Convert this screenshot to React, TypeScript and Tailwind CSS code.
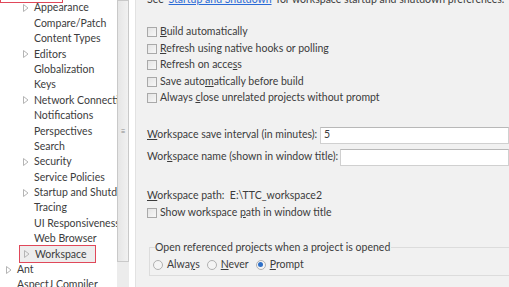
const TREE = [
  { label: 'General', level: 0, arrow: false },
  { label: 'Appearance', level: 1, arrow: true },
  { label: 'Compare/Patch', level: 1 },
  { label: 'Content Types', level: 1 },
  { label: 'Editors', level: 1, arrow: true },
  { label: 'Globalization', level: 1 },
  { label: 'Keys', level: 1 },
  { label: 'Network Connections', level: 1, arrow: true },
  { label: 'Notifications', level: 1 },
  { label: 'Perspectives', level: 1 },
  { label: 'Search', level: 1 },
  { label: 'Security', level: 1, arrow: true },
  { label: 'Service Policies', level: 1 },
  { label: 'Startup and Shutdown', level: 1, arrow: true },
  { label: 'Tracing', level: 1 },
  { label: 'UI Responsiveness Monitoring', level: 1 },
  { label: 'Web Browser', level: 1 },
  { label: 'Workspace', level: 1, arrow: true, selected: true },
  { label: 'Ant', level: 0, arrow: true },
  { label: 'AspectJ Compiler', level: 0 },
]

function Arrow() {
  return (
    <svg width="6" height="8" viewBox="0 0 6 8" className="shrink-0">
      <path d="M0.5 0.5 L5 4 L0.5 7.5 Z" fill="none" stroke="#b4b4b4" strokeWidth="1" />
    </svg>
  )
}

function Checkbox() {
  return <span className="inline-block w-[10px] h-[10px] shrink-0 border border-[#a9a9a9] bg-gradient-to-br from-[#e4e4e4] to-[#f7f7f7]" />
}

function Radio({ checked }: { checked?: boolean }) {
  return (
    <span className="w-[10px] h-[10px] shrink-0 rounded-full border border-[#b0b0b0] bg-[#f4f4f4] flex items-center justify-center">
      {checked && <span className="w-[5px] h-[5px] rounded-full bg-[#2d6fc7]" />}
    </span>
  )
}

function CheckRow({ children }: { children: React.ReactNode }) {
  return (
    <div className="flex items-center gap-[3px] h-[16.5px]">
      <Checkbox />
      <span>{children}</span>
    </div>
  )
}

export default function App() {
  return (
    <div
      className="w-[509px] h-[287px] overflow-hidden flex bg-white text-[#3c3c3c] text-[10.5px]"
      style={{ fontFamily: 'Lato, "Noto Sans", sans-serif' }}
    >
      {/* preference tree */}
      <div className="w-[117px] shrink-0 overflow-hidden">
        <div className="mt-[-15px] leading-[15.4px]">
          {TREE.map(item => (
            <div key={item.label} className={`flex items-center h-[15.4px] whitespace-nowrap ${item.level ? 'pl-[23px]' : 'pl-[6px]'}`}>
              <span className="w-[11px] flex items-center shrink-0">{item.arrow && <Arrow />}</span>
              {item.label === 'General' ? (
                <span className="border-[1.5px] border-[#e0485a] w-[63px] h-[20px] mt-[1px] ml-[-17px]" />
              ) : item.selected ? (
                <span className="border-[1.5px] border-[#e0485a] bg-[#ededed] w-[77px] h-[18px] flex items-center pl-[4px] ml-[-15px]">
                  <span className="w-[11px] flex items-center shrink-0"><Arrow /></span>
                  {item.label}
                </span>
              ) : (
                <span>{item.label}</span>
              )}
            </div>
          ))}
        </div>
      </div>

      {/* scrollbar */}
      <div className="w-[12px] shrink-0 bg-[#ececec] flex flex-col">
        <div className="h-[262px] border border-[#c9c9c9] bg-gradient-to-r from-[#e6e6e6] to-[#f1f1f1] flex items-center justify-center">
          <span className="text-[8px] text-[#8a8a8a] leading-none">≡</span>
        </div>
      </div>

      <div className="w-[7px] shrink-0 bg-white border-r border-[#e2e2e2]" />

      {/* workspace page */}
      <div className="flex-1 bg-[#f1f1f1] pl-[11px] whitespace-nowrap overflow-hidden">
        <div className="mt-[-7px] h-[12px] leading-[12px]">
          See '<span className="text-[#2a6ad6] underline">Startup and Shutdown</span>' for workspace startup and shutdown preferences.
        </div>

        <div className="mt-[19px]">
          <CheckRow><u>B</u>uild automatically</CheckRow>
          <CheckRow><u>R</u>efresh using native hooks or polling</CheckRow>
          <CheckRow>Refresh on acce<u>s</u>s</CheckRow>
          <CheckRow>Save auto<u>m</u>atically before build</CheckRow>
          <CheckRow>Always <u>c</u>lose unrelated projects without prompt</CheckRow>
        </div>

        <div className="mt-[20px] flex items-center h-[17px]">
          <span className="w-[173px]"><u>W</u>orkspace save interval (in minutes):</span>
          <div className="flex-1 h-[17px] bg-white border border-[#d0d0d0] border-t-[#b8b8b8] pl-[3px] flex items-center">5</div>
        </div>
        <div className="mt-[5px] flex items-center h-[17px]">
          <span className="w-[193px]">Wor<u>k</u>space name (shown in window title):</span>
          <div className="flex-1 h-[17px] bg-white border border-[#d0d0d0] border-t-[#b8b8b8]" />
        </div>

        <div className="mt-[22px] h-[16px] flex items-center">
          <span><u>W</u>orkspace path:&nbsp;&nbsp;E:\TTC_workspace2</span>
        </div>
        <div className="mt-[1px]">
          <CheckRow>Show workspace <u>p</u>ath in window title</CheckRow>
        </div>

        <div className="mt-[26px] ml-[2px] border border-[#dcdcdc] border-r-0 h-[29px] relative">
          <div className="absolute left-[5px] top-[-8px] bg-[#f1f1f1] pr-[1px] leading-[14px]">Open referenced projects when a project is opened</div>
          <div className="flex items-center gap-[7px] pl-[3px] pt-[9px]">
            <div className="flex items-center gap-[4px]"><Radio /><span>Alwa<u>y</u>s</span></div>
            <div className="flex items-center gap-[4px]"><Radio /><span><u>N</u>ever</span></div>
            <div className="flex items-center gap-[4px]"><Radio checked /><span><u>P</u>rompt</span></div>
          </div>
        </div>
      </div>
    </div>
  )
}
